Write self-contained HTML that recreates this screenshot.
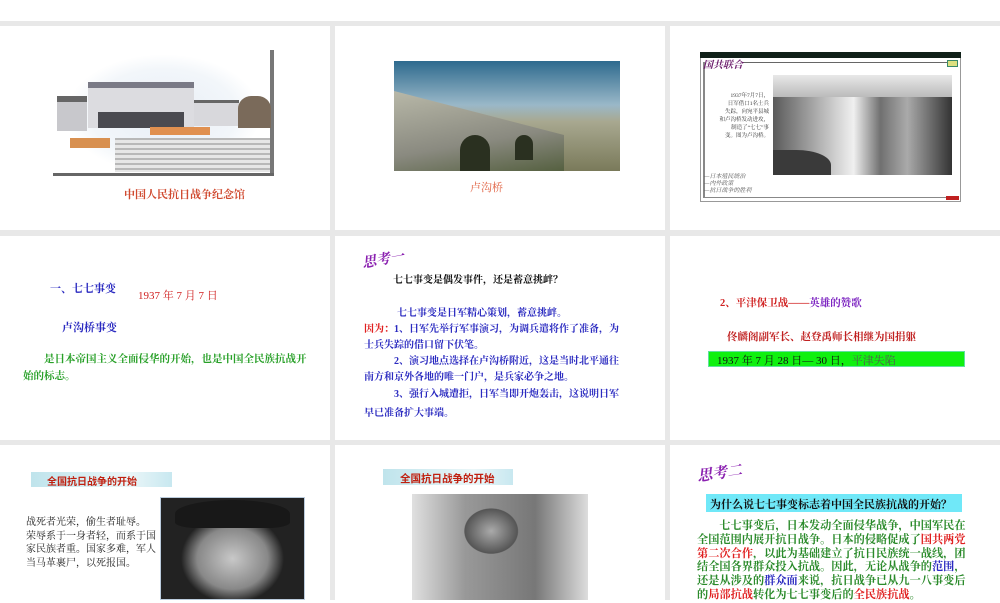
<!DOCTYPE html>
<html><head><meta charset="utf-8"><style>
*{margin:0;padding:0;box-sizing:border-box}
body{width:1000px;height:600px;background:#fff;position:relative;overflow:hidden;font-family:"Liberation Serif","Noto Serif CJK SC","Noto Sans CJK SC",serif}
.bg{position:absolute;left:0;top:21px;width:1000px;height:579px;background:#e8e8e8}
.c{position:absolute;background:#fff}
.a{position:absolute;white-space:nowrap}
.b{font-weight:bold}
.s{font-family:"Liberation Sans","Noto Sans CJK SC",sans-serif}
</style></head><body>
<div class="bg"></div>
<div class="c" style="left:0;top:26px;width:330px;height:204px"></div>
<div class="c" style="left:335px;top:26px;width:330px;height:204px"></div>
<div class="c" style="left:670px;top:26px;width:330px;height:204px"></div>
<div class="c" style="left:0;top:236px;width:330px;height:204px"></div>
<div class="c" style="left:335px;top:236px;width:330px;height:204px"></div>
<div class="c" style="left:670px;top:236px;width:330px;height:204px"></div>
<div class="c" style="left:0;top:445px;width:330px;height:155px"></div>
<div class="c" style="left:335px;top:445px;width:330px;height:155px"></div>
<div class="c" style="left:670px;top:445px;width:330px;height:155px"></div>

<!-- row1 col1: memorial photo -->
<div class="a" style="left:53px;top:52px;width:221px;height:124px;background:radial-gradient(ellipse 55% 60% at 50% 50%,#e8eef6 0,#f2f6fa 60%,#fff 80%)"></div>
<div class="a" style="left:270px;top:50px;width:4px;height:126px;background:#777"></div>
<div class="a" style="left:53px;top:173px;width:221px;height:3px;background:#666"></div>
<div class="a" style="left:57px;top:96px;width:30px;height:35px;background:#c8c8cc;border-top:6px solid #666"></div>
<div class="a" style="left:88px;top:82px;width:106px;height:46px;background:#dcdce0;border-top:6px solid #7a7a86"></div>
<div class="a" style="left:98px;top:112px;width:86px;height:16px;background:#4a4a50"></div>
<div class="a" style="left:194px;top:100px;width:45px;height:26px;background:#d8d8dc;border-top:3px solid #666"></div>
<div class="a" style="left:238px;top:96px;width:33px;height:32px;background:#7a6a5a;border-radius:40% 40% 0 0"></div>
<div class="a" style="left:150px;top:127px;width:60px;height:8px;background:#e09050"></div>
<div class="a" style="left:70px;top:138px;width:40px;height:10px;background:#d89050"></div>
<div class="a" style="left:115px;top:138px;width:155px;height:34px;background:repeating-linear-gradient(#b8b8b8 0 2px,#e6e6e6 2px 5px)"></div>
<div class="a b" style="left:124px;top:186px;font-size:11px;color:#d04a30">中国人民抗日战争纪念馆</div>

<!-- row1 col2: bridge -->
<div class="a" style="left:394px;top:61px;width:226px;height:110px;background:linear-gradient(#2e6a8e,#9ab8c8 40%,#a8a890 55%,#7a7a5a)"></div>
<div class="a" style="left:394px;top:91px;width:170px;height:80px;background:linear-gradient(170deg,#b8b8a8,#8a8a80 60%,#556040);clip-path:polygon(0 0,100% 55%,100% 100%,0 100%)"></div>
<div class="a" style="left:460px;top:135px;width:30px;height:36px;border-radius:15px 15px 0 0;background:#2a3020"></div>
<div class="a" style="left:515px;top:135px;width:18px;height:25px;border-radius:9px 9px 0 0;background:#2a3020"></div>
<div class="a" style="left:470px;top:179px;font-size:11px;color:#e06040">卢沟桥</div>

<!-- row1 col3: window -->
<div class="a" style="left:700px;top:52px;width:261px;height:150px;border:1px solid #999;background:#fff"></div>
<div class="a" style="left:700px;top:52px;width:261px;height:6px;background:#102018"></div>
<div class="a" style="left:743px;top:62px;width:207px;height:1px;background:#666"></div>
<div class="a" style="left:703px;top:62px;width:2px;height:136px;background:#888"></div>
<div class="a" style="left:703px;top:197px;width:252px;height:1px;background:#888"></div>
<div class="a b" style="left:703px;top:56px;font-size:10px;color:#6a1a6a;font-style:italic">国共联合</div>
<div class="a" style="left:947px;top:60px;width:11px;height:7px;background:#dde080;border:1px solid #3a8a6a"></div>
<div class="a" style="left:946px;top:196px;width:13px;height:4px;background:#c02020"></div>
<div class="a" style="left:773px;top:75px;width:179px;height:100px;background:linear-gradient(90deg,#5a5a5a,#d0d0d0 35%,#f0f0f0 45%,#707070 60%,#aaa 75%,#333);"></div>
<div class="a" style="left:773px;top:75px;width:179px;height:22px;background:linear-gradient(#e8e8e8,#bbb)"></div>
<div class="a" style="left:773px;top:150px;width:58px;height:25px;background:#3a3a3a;border-radius:0 60% 0 0"></div>
<div class="a" style="left:705px;top:92px;font-size:5.5px;line-height:8px;color:#333;text-align:right;width:64px">1937年7月7日，<br>日军借口1名士兵<br>失踪，向宛平县城<br>和卢沟桥发动进攻，<br>制造了“七七”事<br>变。图为卢沟桥。</div>
<div class="a" style="left:704px;top:174px;font-size:6px;line-height:7px;color:#555;font-style:italic">—日本殖民统治<br>—内外政策<br>—抗日战争的胜利</div>

<!-- row2 col1 -->
<div class="a b" style="left:50px;top:280px;font-size:11px;color:#2a2ac0">一、七七事变</div>
<div class="a" style="left:138px;top:287px;font-size:11px;color:#d02020">1937 年 7 月 7 日</div>
<div class="a b" style="left:62px;top:319px;font-size:11px;color:#2a2ac0">卢沟桥事变</div>
<div class="a b" style="left:23px;top:351px;font-size:10.5px;line-height:17px;color:#28a028">　　是日本帝国主义全面侵华的开始，也是中国全民族抗战开<br>始的标志。</div>

<!-- row2 col2 -->
<div class="a b" style="left:362px;top:249px;font-size:14px;color:#8a20b0;font-style:italic;transform:rotate(-10deg)">思考一</div>
<div class="a b" style="left:393px;top:271px;font-size:10px;color:#111">七七事变是偶发事件，还是蓄意挑衅？</div>
<div class="a b" style="left:397px;top:304px;font-size:10px;color:#2a2ac0">七七事变是日军精心策划，蓄意挑衅。</div>
<div class="a b" style="left:364px;top:322px;font-size:10px;line-height:15.5px;color:#2a2ac0"><span style="color:#e02020">因为：</span>1、日军先举行军事演习，为调兵遣将作了准备，为<br>士兵失踪的借口留下伏笔。</div>
<div class="a b" style="left:364px;top:354px;font-size:10px;line-height:15.5px;color:#2a2ac0">　　　2、演习地点选择在卢沟桥附近，这是当时北平通往<br>南方和京外各地的唯一门户，是兵家必争之地。</div>
<div class="a b" style="left:364px;top:385px;font-size:10px;line-height:19px;color:#2a2ac0">　　　3、强行入城遭拒，日军当即开炮轰击，这说明日军<br>早已准备扩大事端。</div>

<!-- row2 col3 -->
<div class="a b" style="left:720px;top:295px;font-size:10.5px;color:#d02020">2、平津保卫战——<span style="color:#7a20c0">英雄的赞歌</span></div>
<div class="a b" style="left:727px;top:329px;font-size:10.5px;color:#c02020">佟麟阁副军长、赵登禹师长相继为国捐躯</div>
<div class="a" style="left:708px;top:351px;width:257px;height:16px;background:#10f010;border:1px solid #60e0a0"></div>
<div class="a" style="left:717px;top:352px;font-size:11px;color:#111">1937 年 7 月 28 日— 30 日，<span style="color:#555">平津失陷</span></div>

<!-- row3 col1 -->
<div class="a" style="left:31px;top:472px;width:141px;height:15px;background:linear-gradient(90deg,#bfe4ec,#eaf6f8 70%,#c8e8f0)"></div>
<div class="a b s" style="left:47px;top:473px;font-size:10px;color:#c02010">全国抗日战争的开始</div>
<div class="a" style="left:26px;top:516px;font-size:10px;line-height:13.7px;color:#222">战死者光荣，偷生者耻辱。<br>荣辱系于一身者轻，而系于国<br>家民族者重。国家多难，军人<br>当马革裹尸，以死报国。</div>
<div class="a" style="left:160px;top:497px;width:145px;height:103px;background:radial-gradient(ellipse 45% 55% at 50% 60%,#c8c8c8,#888 55%,#222 80%);border:1px solid #bcd"></div>
<div class="a" style="left:175px;top:500px;width:115px;height:28px;background:#181818;border-radius:50% 50% 20% 20%"></div>

<!-- row3 col2 -->
<div class="a" style="left:383px;top:469px;width:130px;height:16px;background:linear-gradient(90deg,#bfe4ec,#eaf6f8 70%,#c8e8f0)"></div>
<div class="a b s" style="left:400px;top:471px;font-size:10.5px;color:#c02010">全国抗日战争的开始</div>
<div class="a" style="left:412px;top:494px;width:176px;height:106px;background:radial-gradient(ellipse 25% 35% at 45% 35%,#aaa,#555 60%,transparent 62%),linear-gradient(90deg,#e0e0e0,#999 30%,#777 70%,#ddd)"></div>

<!-- row3 col3 -->
<div class="a b" style="left:697px;top:462px;font-size:15px;color:#8a20b0;font-style:italic;transform:rotate(-8deg)">思考二</div>
<div class="a" style="left:706px;top:494px;width:256px;height:18px;background:#70e8f8"></div>
<div class="a b" style="left:710px;top:496px;font-size:11px;color:#111">为什么说七七事变标志着中国全民族抗战的开始？</div>
<div class="a b" style="left:697px;top:520px;font-size:11.2px;line-height:13.8px;color:#2a8a2a">　　七七事变后，日本发动全面侵华战争，中国军民在<br>全国范围内展开抗日战争。日本的侵略促成了<span style="color:#e02020">国共两党</span><br><span style="color:#e02020">第二次合作</span>，以此为基础建立了抗日民族统一战线，团<br>结全国各界群众投入抗战。因此，无论从战争的<span style="color:#2a2ac0">范围</span>，<br>还是从涉及的<span style="color:#2a2ac0">群众面</span>来说，抗日战争已从九一八事变后<br>的<span style="color:#e02020">局部抗战</span>转化为七七事变后的<span style="color:#e02020">全民族抗战</span>。</div>
</body></html>
